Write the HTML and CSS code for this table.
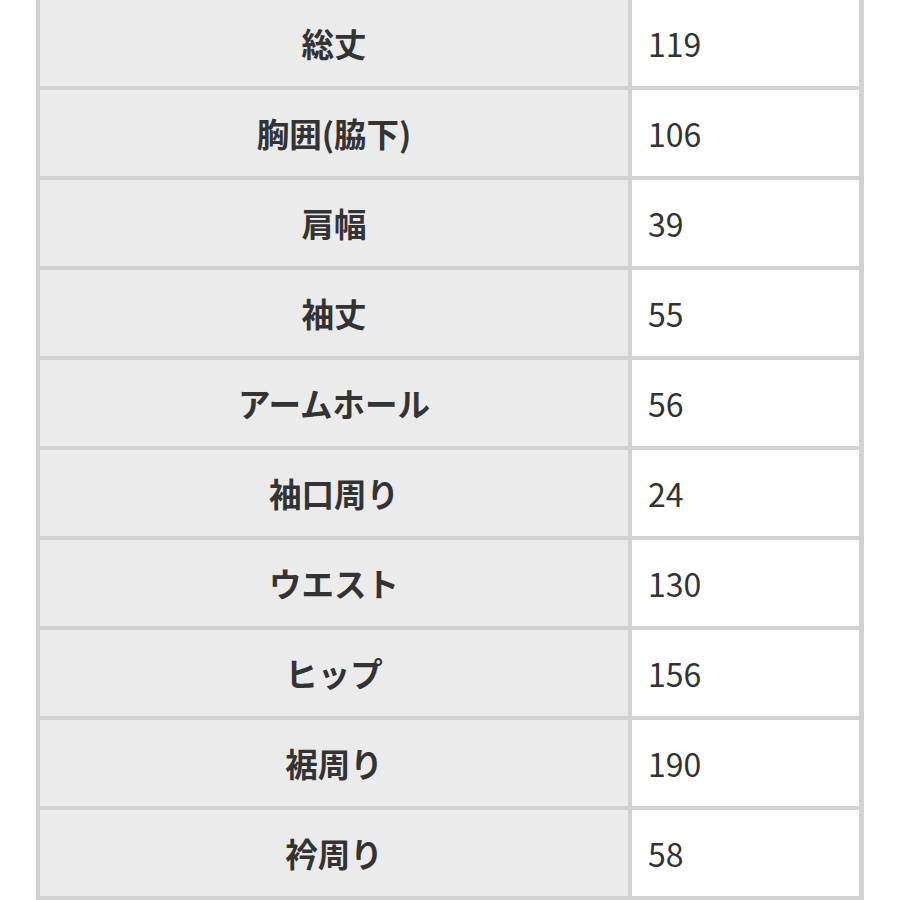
FILE: index.html
```html
<!DOCTYPE html>
<html lang="ja">
<head>
<meta charset="utf-8">
<link rel="stylesheet" href="styles.css">
</head>
<body>
<div class="size-table">
  <div class="label">総丈</div><div class="value">119</div>
  <div class="label">胸囲(脇下)</div><div class="value">106</div>
  <div class="label">肩幅</div><div class="value">39</div>
  <div class="label">袖丈</div><div class="value">55</div>
  <div class="label">アームホール</div><div class="value">56</div>
  <div class="label">袖口周り</div><div class="value">24</div>
  <div class="label">ウエスト</div><div class="value">130</div>
  <div class="label">ヒップ</div><div class="value">156</div>
  <div class="label">裾周り</div><div class="value">190</div>
  <div class="label">衿周り</div><div class="value">58</div>
</div>
</body>
</html>
```
FILE: styles.css
```css
html, body {
  margin: 0;
  padding: 0;
  background: #ffffff;
}
body {
  font-family: "Noto Sans CJK JP", "Noto Sans", sans-serif;
  color: #333333;
}
.size-table {
  width: 828px;
  margin: 0 auto;
  box-sizing: border-box;
  padding: 0 5px 4px 4px;
  background: #d2d2d2;
  display: grid;
  grid-template-columns: 588px 227px;
  grid-auto-rows: 86px;
  column-gap: 4px;
  row-gap: 4px;
}
.label, .value {
  display: flex;
  align-items: center;
  line-height: 1;
}
.label {
  background: #ebebeb;
  justify-content: center;
  font-size: 32.5px;
  font-weight: 700;
}
.value {
  background: #ffffff;
  padding-left: 16px;
  font-weight: 400;
  font-size: 32px;
}
```
